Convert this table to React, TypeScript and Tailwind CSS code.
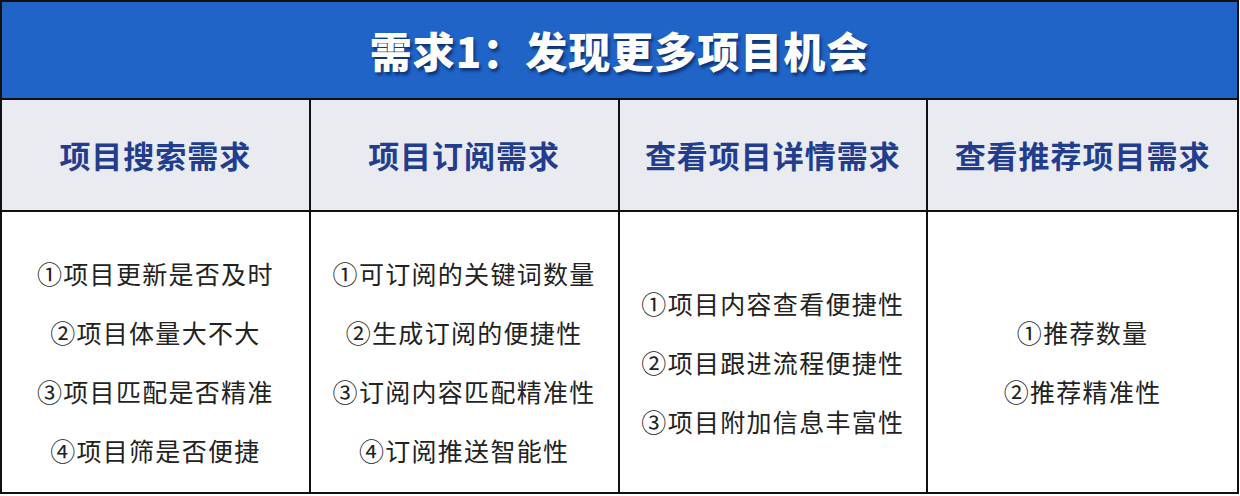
const columns: { title: string; items: string[] }[] = [
  {
    title: "项目搜索需求",
    items: ["①项目更新是否及时", "②项目体量大不大", "③项目匹配是否精准", "④项目筛是否便捷"],
  },
  {
    title: "项目订阅需求",
    items: ["①可订阅的关键词数量", "②生成订阅的便捷性", "③订阅内容匹配精准性", "④订阅推送智能性"],
  },
  {
    title: "查看项目详情需求",
    items: ["①项目内容查看便捷性", "②项目跟进流程便捷性", "③项目附加信息丰富性"],
  },
  {
    title: "查看推荐项目需求",
    items: ["①推荐数量", "②推荐精准性"],
  },
]

const font = { fontFamily: '"Noto Sans CJK SC", "Noto Sans", sans-serif' }

export default function App() {
  return (
    <div className="w-[1240px] h-[496px] bg-white" style={font}>
      <div className="w-[1239px] h-[494px] border-2 border-[#111] flex flex-col">
        <div className="h-[98px] shrink-0 bg-[#1f64c6] border-b-2 border-[#111] flex items-center justify-center">
          <h1 className="text-[42px] font-black text-white tracking-[1px] [text-shadow:2px_3px_3px_rgba(0,20,70,0.6)] leading-none">
            需求1：发现更多项目机会
          </h1>
        </div>
        <div className="grid grid-cols-4 h-[112px] shrink-0 bg-[#e9ebf0] border-b-2 border-[#111]">
          {columns.map((col, i) => (
            <div
              key={col.title}
              className={`flex items-center justify-center ${i < 3 ? "border-r-2 border-[#111]" : ""}`}
            >
              <span className="text-[31px] font-bold text-[#233d8e] tracking-[1px]">{col.title}</span>
            </div>
          ))}
        </div>
        <div className="grid grid-cols-4 flex-1">
          {columns.map((col, i) => (
            <div
              key={col.title}
              className={`flex flex-col items-center justify-center pt-5 ${i < 3 ? "border-r-2 border-[#111]" : ""}`}
            >
              {col.items.map((item) => (
                <p key={item} className="text-[25px] leading-[59px] text-[#222] tracking-[1.3px]">
                  {item}
                </p>
              ))}
            </div>
          ))}
        </div>
      </div>
    </div>
  )
}
